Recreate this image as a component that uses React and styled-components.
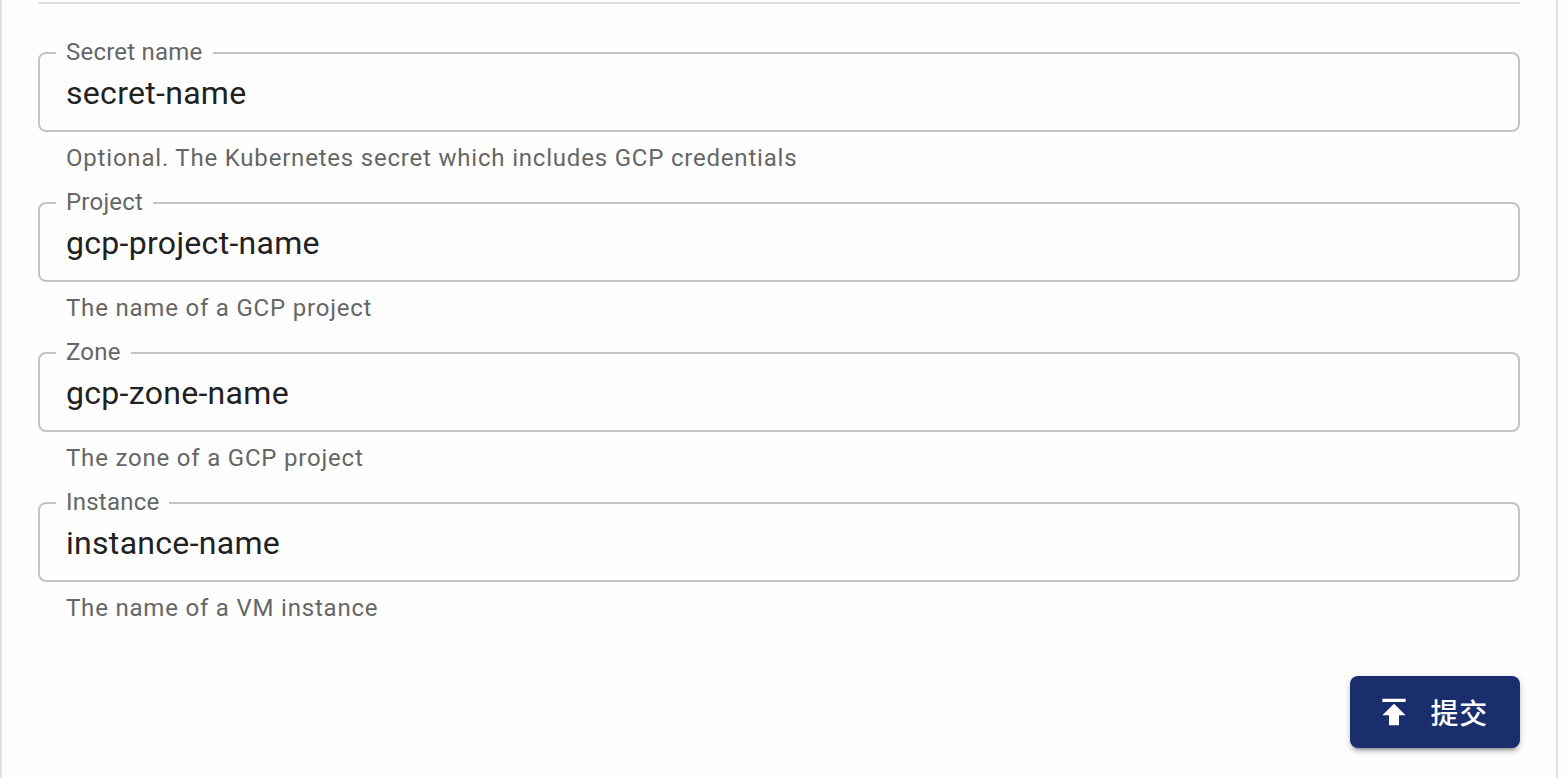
import React, { useId } from "react";
import styled, { createGlobalStyle } from "styled-components";

const GlobalStyle = createGlobalStyle`
  *, *::before, *::after { box-sizing: border-box; }
  body {
    margin: 0;
    background: #fefefe;
    color: #212121;
    font-family: Roboto, "Noto Sans CJK SC", sans-serif;
  }
`;

const Panel = styled.main`
  margin-right: 10px;
  padding: 2px 36px 30px;
  min-height: 100vh;
  border: solid #e0e0e0;
  border-width: 0 2px;
`;

const Divider = styled.hr`
  margin: 0;
  border: 0;
  border-top: 2px solid #e0e0e0;
`;

const Form = styled.form`
  display: flex;
  flex-direction: column;
  padding-top: 36px;
`;

const Field = styled.div`
  height: 150px;
`;

const Outline = styled.fieldset`
  margin: 0;
  padding: 0 16px;
  height: 92px;
  min-width: 0;
  border: 2px solid #c4c4c4;
  border-radius: 8px;
`;

const Legend = styled.legend`
  padding: 0 10px;
  height: 26px;
  color: #666666;
  font-size: 24px;
  line-height: 24px;
  letter-spacing: 0.00938em;
`;

const Input = styled.input`
  display: block;
  width: 100%;
  height: 54px;
  padding: 0 10px;
  border: 0;
  outline: 0;
  background: transparent;
  color: #212121;
  font: 400 32px/40px Roboto, sans-serif;
  letter-spacing: 0.00938em;
`;

const Helper = styled.p`
  margin: 6px 28px 0;
  color: #666666;
  font-size: 24px;
  line-height: 40px;
  letter-spacing: 0.03333em;
`;

const Actions = styled.div`
  display: flex;
  justify-content: flex-end;
  padding-top: 36px;
`;

const SubmitButton = styled.button`
  display: flex;
  align-items: center;
  gap: 16px;
  height: 72px;
  padding: 0 32px 0 24px;
  border: 0;
  border-radius: 8px;
  background: #1a2e6e;
  color: #ffffff;
  font: 500 28px/48px "Noto Sans CJK SC", sans-serif;
  letter-spacing: 0.02857em;
  box-shadow: 0 6px 2px -4px #00000033, 0 4px 4px #00000024, 0 2px 10px #0000001f;
`;

const fields = [
  { label: "Secret name", value: "secret-name", help: "Optional. The Kubernetes secret which includes GCP credentials" },
  { label: "Project", value: "gcp-project-name", help: "The name of a GCP project" },
  { label: "Zone", value: "gcp-zone-name", help: "The zone of a GCP project" },
  { label: "Instance", value: "instance-name", help: "The name of a VM instance" },
];

function TextField({ label, value, help }) {
  const id = useId();
  return (
    <Field>
      <Outline>
        <Legend><label htmlFor={id}>{label}</label></Legend>
        <Input id={id} type="text" defaultValue={value} aria-describedby={`${id}-help`} />
      </Outline>
      <Helper id={`${id}-help`}>{help}</Helper>
    </Field>
  );
}

export default function App() {
  return (
    <>
      <GlobalStyle />
      <Panel>
        <Divider />
        <Form onSubmit={(event) => event.preventDefault()}>
          {fields.map((field) => <TextField key={field.label} {...field} />)}
          <Actions>
            <SubmitButton type="submit">
              <svg width="40" height="40" viewBox="0 0 24 24" fill="currentColor" aria-hidden="true">
                <path d="M5 4v2h14V4H5zm0 10h4v6h6v-6h4l-7-7-7 7z" />
              </svg>
              提交
            </SubmitButton>
          </Actions>
        </Form>
      </Panel>
    </>
  );
}
